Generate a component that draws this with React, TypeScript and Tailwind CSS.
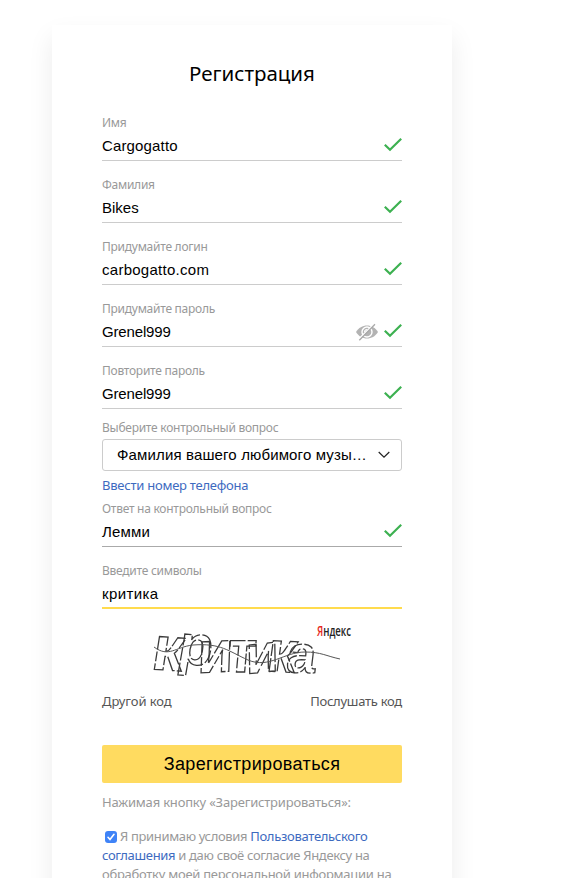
import type { ReactNode } from 'react';

const body = "font-['Noto_Sans','Open_Sans',sans-serif]";
const input = "font-['Liberation_Sans',Arial,sans-serif]";

function Check() {
  return (
    <svg width="18" height="14" viewBox="0 0 18 14" fill="none" stroke="#3db151" strokeWidth="2.2">
      <path d="M0.8 6.7 6 11.8 17.2 0.8" />
    </svg>
  );
}

function HiddenEye() {
  return (
    <svg width="22" height="18" viewBox="0 0 22 18" fill="none">
      <path d="M0 9C5 .3 17 .3 22 9C17 17.7 5 17.7 0 9Z" fill="#b3b3b3" />
      <circle cx="11" cy="9" r="5" stroke="#fff" strokeWidth="1.4" />
      <path d="M8.6 9a2.6 2.6 0 0 1 2.4-2.5" stroke="#fff" strokeWidth="1.2" />
      <path d="M2.3 16.5 18 .7" stroke="#fff" strokeWidth="1.5" />
      <path d="M3.3 17.3 19 1.3" stroke="#a9a9a9" strokeWidth="1.3" />
    </svg>
  );
}

function Label({ children, className = '' }: { children: ReactNode; className?: string }) {
  return <label className={`block h-4 text-xs leading-4 tracking-[-0.26px] whitespace-nowrap text-[#999] ${className}`}>{children}</label>;
}

type FieldProps = {
  label: string;
  value: string;
  valueClass?: string;
  box?: string;
  row?: string;
  valid?: boolean;
  hidden?: boolean;
};

function Field({ label, value, valueClass = '', box = 'h-[62px] border-b border-[#ccc]', row = '', valid = true, hidden = false }: FieldProps) {
  return (
    <div className={`flex flex-col justify-end ${box}`}>
      <Label>{label}</Label>
      <div className={`flex h-[29px] items-center justify-between ${row}`}>
        <span className={`text-[15px] leading-[29px] text-black ${input} ${valueClass}`}>{value}</span>
        <span className="flex items-center gap-1.5 pb-0.5">
          {hidden && <span className="pt-0.5"><HiddenEye /></span>}
          {valid && <Check />}
        </span>
      </div>
    </div>
  );
}

const letters = [
  { ch: 'к', x: -2, y: 42, rotate: 4, size: 58, dash: '16 2 9 2' },
  { ch: 'р', x: 24, y: 36, rotate: 5, size: 52, dash: '12 2 17 2' },
  { ch: 'и', x: 45, y: 46, rotate: -3, size: 54, dash: '19 2 8 2' },
  { ch: 'т', x: 74, y: 45, rotate: 0, size: 55, dash: '14 2 10 2' },
  { ch: 'и', x: 94, y: 47, rotate: -6, size: 50, dash: '12 3 17 2' },
  { ch: 'к', x: 113, y: 44, rotate: 3, size: 54, dash: '11 2 18 2' },
  { ch: 'а', x: 133, y: 45, rotate: 2, size: 49, dash: '14 2 9 2' },
];

function Captcha() {
  return (
    <svg width="200" height="60" viewBox="0 0 200 60" className="overflow-visible">
      <g fill="none" stroke="#3a3a3a" strokeWidth="1.2">
        {letters.map((l, i) => (
          <text key={i} transform={`translate(${l.x} ${l.y}) rotate(${l.rotate}) skewX(-5) scale(1.08 1.08)`} fontSize={l.size} fontWeight="700" fontFamily="Liberation Sans" strokeDasharray={l.dash}>{l.ch}</text>
        ))}
        <path d="M2 20C17 31 23 20 41 18C69 16 76 24 96 33C117 42 132 25 153 25C169 25 174 29 188 32" stroke="#555" strokeWidth="1" />
      </g>
      <text x="165" y="8.5" fontFamily="Open Sans" fontSize="14" fontWeight="600" fill="#222" textLength="34" lengthAdjust="spacingAndGlyphs">
        <tspan fill="#e52620">Я</tspan>ндекс
      </text>
    </svg>
  );
}

export default function App() {
  return (
    <div className={`h-[878px] w-[567px] overflow-hidden bg-white pt-[25px] pl-[52px] ${body}`}>
      <main className="h-[980px] w-[400px] bg-white px-[50px] shadow-[0_12px_24px_rgba(0,0,0,0.08)]">
        <h1 className="h-[74px] pt-[33px] text-center text-[20.5px] leading-[30px] text-black">Регистрация</h1>
        <Field label="Имя" value="Cargogatto" valueClass="tracking-[0.15px]" />
        <Field label="Фамилия" value="Bikes" />
        <Field label="Придумайте логин" value="carbogatto.com" valueClass="tracking-[0.27px]" />
        <Field label="Придумайте пароль" value="Grenel999" valueClass="tracking-[-0.15px]" hidden />
        <Field label="Повторите пароль" value="Grenel999" valueClass="tracking-[-0.15px]" />

        <div className="flex h-[62px] flex-col justify-end">
          <Label className="mb-[3px]">Выберите контрольный вопрос</Label>
          <button className={`flex h-8 w-full items-center justify-between rounded-[3px] border border-[#ccc] pr-[11px] pl-[14px] text-[15px] tracking-[0.14px] text-black ${input}`}>
            <span className="whitespace-nowrap">Фамилия вашего любимого музы…</span>
            <svg width="12" height="8" viewBox="0 0 12 8" fill="none" stroke="#222" strokeWidth="1.2"><path d="m.7 1 5.3 5.2L11.3 1" /></svg>
          </button>
        </div>
        <a className="block h-[30px] text-[13px] leading-[29px] tracking-[-0.24px] whitespace-nowrap text-[#3d6abf]">Ввести номер телефона</a>
        <Field label="Ответ на контрольный вопрос" value="Лемми" valueClass="tracking-[0.2px]" box="h-[46px] border-b border-[#aaa]" />
        <Field label="Введите символы" value="критика" valueClass="tracking-[0.4px]" valid={false} box="h-[62px] border-b-2 border-[#ffdb4d]" row="-mb-px" />

        <div className="flex h-[81px] justify-center pt-[18px]"><Captcha /></div>
        <div className="flex h-[55px] justify-between text-[13px] leading-[23px] text-[#555]">
          <span className="tracking-[-0.1px]">Другой код</span>
          <span className="tracking-[-0.27px]">Послушать код</span>
        </div>
        <button className={`h-[38px] w-full rounded-[2px] bg-[#ffdb60] text-[18px] tracking-[0.36px] text-black ${input}`}>Зарегистрироваться</button>
        <p className="mt-2.5 text-[13px] leading-[19px] tracking-[-0.19px] text-[#999]">Нажимая кнопку «Зарегистрироваться»:</p>
        <div className="mt-[15px] text-[13px] leading-[19px] tracking-[-0.27px] whitespace-nowrap text-[#999]">
          <div className="flex items-center">
            <span className="mr-[3px] ml-[3px] flex size-3 items-center justify-center rounded-[3px] bg-[#3f83f7]">
              <svg width="10" height="10" viewBox="0 0 10 10" fill="none" stroke="#fff" strokeWidth="1.6" strokeLinecap="round"><path d="m2 5.3 2 2.2L8 2.3" /></svg>
            </span>
            <span className="tracking-[-0.35px]">Я принимаю условия <a className="tracking-[-0.3px] text-[#3d6abf]">Пользовательского</a></span>
          </div>
          <div className="tracking-[-0.33px]"><a className="text-[#3d6abf]">соглашения</a> и даю своё согласие Яндексу на</div>
          <div>обработку моей персональной информации на</div>
        </div>
      </main>
    </div>
  );
}
